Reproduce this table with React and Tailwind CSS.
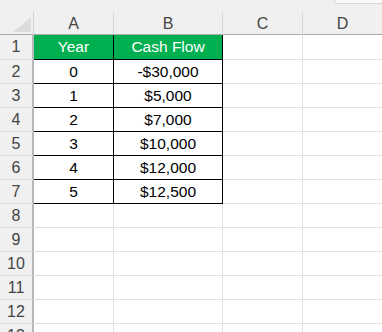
const cols = ['A', 'B', 'C', 'D'];

const data = [
  ['0', '-$30,000'],
  ['1', '$5,000'],
  ['2', '$7,000'],
  ['3', '$10,000'],
  ['4', '$12,000'],
  ['5', '$12,500'],
];

const font = { fontFamily: '"Liberation Sans", Arial, sans-serif' };

function RowHead({ n, h }) {
  return (
    <div
      className={`flex items-center justify-center bg-[#f0f0f0] border-r-2 border-r-[#b8b8b8] border-b border-b-[#dadada] text-[16px] text-[#444] ${h}`}
    >
      {n}
    </div>
  );
}

export default function App() {
  const rows = [];
  for (let r = 1; r <= 13; r++) {
    const h = r === 1 ? 'h-[25px]' : 'h-[24px]';
    if (r === 1) {
      rows.push(
        <div key={r} className="grid grid-cols-[34px_80px_109px_80px_1fr]">
          <RowHead n={r} h={h} />
          <div className={`flex items-center justify-center bg-[#00b050] text-white border-r border-b border-black ${h}`}>Year</div>
          <div className={`flex items-center justify-center bg-[#00b050] text-white border-r border-b border-black ${h}`}>Cash Flow</div>
          <div className={`border-r border-b border-[#e1e1e1] ${h}`} />
          <div className={`border-b border-[#e1e1e1] ${h}`} />
        </div>
      );
    } else if (r <= 7) {
      const [y, cf] = data[r - 2];
      rows.push(
        <div key={r} className="grid grid-cols-[34px_80px_109px_80px_1fr]">
          <RowHead n={r} h={h} />
          <div className={`flex items-center justify-center text-black border-r border-b border-black ${h}`}>{y}</div>
          <div className={`flex items-center justify-center text-black border-r border-b border-black ${h}`}>{cf}</div>
          <div className={`border-r border-b border-[#e1e1e1] ${h}`} />
          <div className={`border-b border-[#e1e1e1] ${h}`} />
        </div>
      );
    } else {
      rows.push(
        <div key={r} className="grid grid-cols-[34px_80px_109px_80px_1fr]">
          <RowHead n={r} h={h} />
          <div className={`border-r border-b border-[#e1e1e1] ${h}`} />
          <div className={`border-r border-b border-[#e1e1e1] ${h}`} />
          <div className={`border-r border-b border-[#e1e1e1] ${h}`} />
          <div className={`border-b border-[#e1e1e1] ${h}`} />
        </div>
      );
    }
  }

  return (
    <div className="w-[382px] h-[332px] overflow-hidden bg-white text-[15.5px]" style={font}>
      {/* top strip */}
      <div className="h-[12px] bg-[#f0f0f0] flex justify-end">
        <div className="w-[48px] h-[4px] bg-[#fafafa] border-l border-b border-[#d6d6d6] rounded-bl-[4px]" />
      </div>
      {/* column headers */}
      <div className="grid grid-cols-[34px_80px_109px_80px_1fr] h-[23px] bg-[#f0f0f0] border-b border-[#ababab] text-[16px] text-[#444]">
        <div className="relative border-r border-[#d0d0d0]">
          <svg className="absolute left-[13px] top-[5px]" width="18" height="15" viewBox="0 0 18 15">
            <polygon points="18,0 18,15 0,15" fill="#dcdcdc" />
          </svg>
        </div>
        {cols.map((c, i) => (
          <div
            key={c}
            className={`flex items-center justify-center ${i < 3 ? 'border-r border-[#d6d6d6]' : ''}`}
          >
            {c}
          </div>
        ))}
      </div>
      {rows}
    </div>
  );
}
